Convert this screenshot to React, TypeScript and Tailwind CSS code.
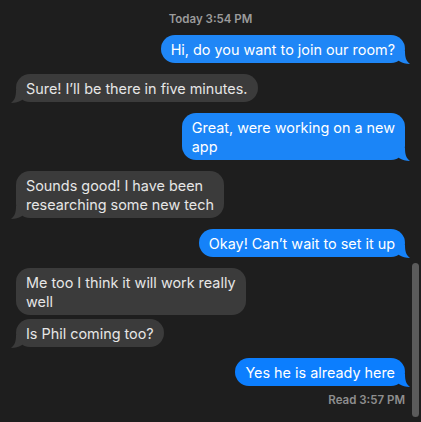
import React from "react";

type Msg = { text: React.ReactNode; me: boolean; tail: boolean; mt: string; color?: string };

const messages: Msg[] = [
    { text: "Hi, do you want to join our room?", me: true, tail: true, mt: "mt-[9px]", color: "#1f86f6" },
    { text: "Sure! I’ll be there in five minutes.", me: false, tail: true, mt: "mt-[11px]" },
    {
        text: (
            <>
                Great, were working on a new
                <br />
                app
            </>
        ),
        me: true,
        tail: true,
        mt: "mt-[11px]",
        color: "#1b85f7",
    },
    {
        text: (
            <>
                Sounds good! I have been
                <br />
                researching some new tech
            </>
        ),
        me: false,
        tail: true,
        mt: "mt-[11px]",
    },
    { text: "Okay! Can’t wait to set it up", me: true, tail: true, mt: "mt-[11px]", color: "#1582f9" },
    {
        text: (
            <>
                Me too I think it will work really
                <br />
                well
            </>
        ),
        me: false,
        tail: false,
        mt: "mt-[11px]",
    },
    { text: "Is Phil coming too?", me: false, tail: true, mt: "mt-1" },
    { text: "Yes he is already here", me: true, tail: true, mt: "mt-[11px]", color: "#0c7efe" },
];

function Tail({ me, color }: { me: boolean; color: string }) {
    if (me) {
        return (
            <svg className="absolute -right-[5px] -bottom-px" width="11" height="13" viewBox="0 0 11 13">
                <path d="M0 0 L6 0 C6 6 7 10 11 13 C7 13 3 12 0 10 Z" fill={color} />
            </svg>
        );
    }
    return (
        <svg className="absolute -left-[5px] -bottom-px" width="11" height="13" viewBox="0 0 11 13">
            <path d="M11 0 L5 0 C5 6 4 10 0 13 C4 13 8 12 11 10 Z" fill={color} />
        </svg>
    );
}

function Bubble({ m }: { m: Msg }) {
    const color = m.me ? m.color ?? "#1b85f7" : "#3b3b3b";
    return (
        <div className={`flex ${m.me ? "justify-end" : "justify-start"} ${m.mt}`}>
            <div
                className={`relative rounded-[14px] px-[10px] pt-[5px] pb-[4px] text-[14.4px] leading-[19px] whitespace-nowrap ${
                    m.me ? "text-white" : "text-[#e6e6e6]"
                }`}
                style={{ backgroundColor: color }}
            >
                {m.tail && <Tail me={m.me} color={color} />}
                <span className="relative">{m.text}</span>
            </div>
        </div>
    );
}

export default function App() {
    return (
        <div
            className="relative h-[422px] w-[421px] overflow-hidden bg-[#1e1e1e] px-4 pt-3"
            style={{ fontFamily: "Inter, 'Liberation Sans', sans-serif" }}
        >
            <div className="text-center text-[11.5px] leading-[14px] font-semibold text-[#9b9b9b]">Today 3:54 PM</div>
            {messages.map((m, i) => (
                <Bubble key={i} m={m} />
            ))}
            <div className="mt-[7px] text-right text-[11.5px] leading-[14px] font-semibold text-[#8e8e8e]">
                Read 3:57 PM
            </div>
            <div className="absolute top-[263px] right-[2px] h-[154px] w-[7px] rounded-full bg-[#5b5b5b]"></div>
        </div>
    );
}
